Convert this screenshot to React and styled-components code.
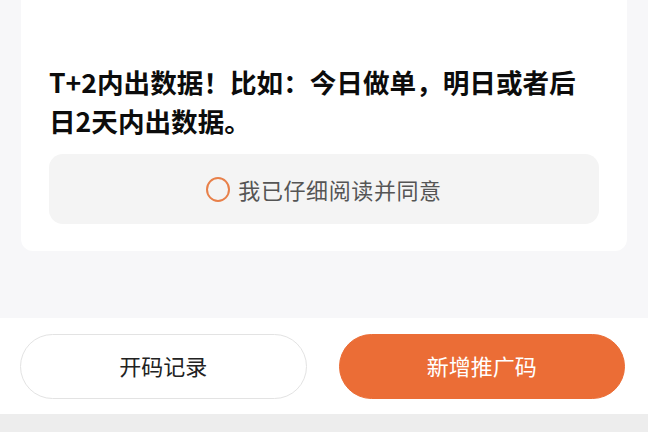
import styled, { createGlobalStyle } from "styled-components";

const Global = createGlobalStyle`
  html, body {
    margin: 0;
    padding: 0;
    background: #f7f7f9;
    font-family: "Noto Sans CJK SC", "Noto Sans", sans-serif;
  }
`;

const Page = styled.div`
  width: 648px;
  height: 432px;
  display: flex;
  flex-direction: column;
  overflow: hidden;
`;

const Card = styled.section`
  margin: 0 21px;
  padding: 62px 28px 27px;
  background: #fff;
  border-radius: 0 0 12px 12px;
`;

const Notice = styled.p`
  margin: 0;
  font-size: 26.6px;
  line-height: 39px;
  font-weight: 700;
  color: #0c0c0c;
`;

const Agree = styled.label`
  margin-top: 14px;
  height: 70px;
  display: flex;
  align-items: center;
  justify-content: center;
  gap: 8px;
  background: #f4f4f4;
  border-radius: 14px;
  font-size: 22px;
  letter-spacing: 0.6px;
  color: #555;
`;

const Radio = styled.span`
  width: 20px;
  height: 21px;
  border: 2px solid #e8804a;
  border-radius: 50%;
`;

const Spacer = styled.div`
  flex: 1;
`;

const Footer = styled.footer`
  height: 96px;
  padding: 16px 23px 0 20px;
  box-sizing: border-box;
  display: flex;
  gap: 32px;
  background: #fff;
  margin-bottom: 18px;
  align-items: flex-start;
`;

const Button = styled.button`
  flex: 1;
  height: 65px;
  padding: 0 0 3px;
  border-radius: 33px;
  font-family: inherit;
  font-size: 22px;
  border: 1px solid ${(p) => (p.$primary ? "#eb6d36" : "#e3e3e3")};
  background: ${(p) => (p.$primary ? "#eb6d36" : "#fff")};
  color: ${(p) => (p.$primary ? "#fff" : "#222")};
`;

const Bottom = styled.div`
  height: 18px;
  background: #ededed;
  margin-top: -18px;
`;

export default function App() {
  return (
    <Page>
      <Global />
      <Card>
        <Notice>
          T+2内出数据！比如：今日做单，明日或者后
          <br />
          日2天内出数据。
        </Notice>
        <Agree>
          <Radio />
          我已仔细阅读并同意
        </Agree>
      </Card>
      <Spacer />
      <Footer>
        <Button>开码记录</Button>
        <Button $primary>新增推广码</Button>
      </Footer>
      <Bottom />
    </Page>
  );
}
